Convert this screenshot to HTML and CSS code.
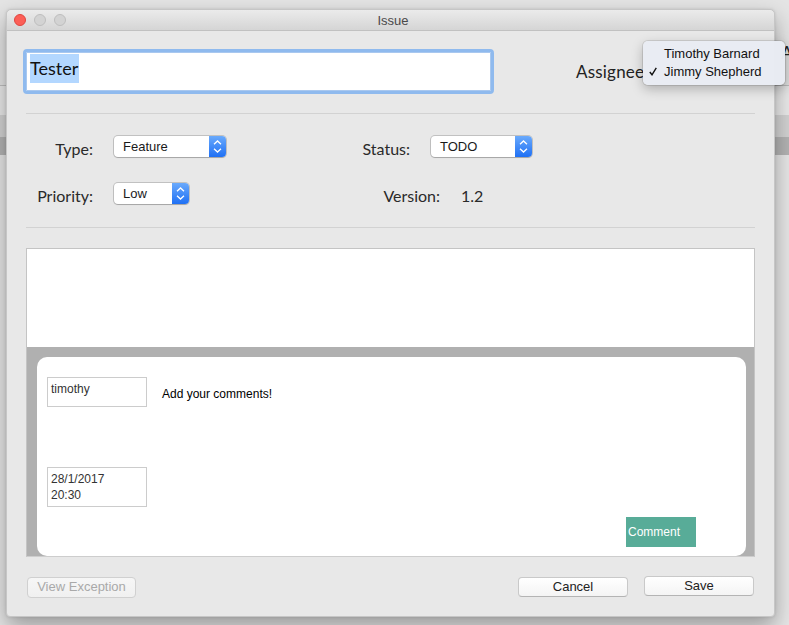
FILE: index.html
```html
<!DOCTYPE html>
<html>
<head>
<meta charset="utf-8">
<title>Issue</title>
<link rel="stylesheet" href="styles.css">
</head>
<body>
<div class="bg-letter">A</div>
<div class="window">
  <div class="titlebar">
    <div class="lights">
      <span class="light red"></span>
      <span class="light"></span>
      <span class="light"></span>
    </div>
    <div class="title">Issue</div>
    <div></div>
  </div>
  <div class="content">
    <div class="top-row">
      <div class="field"><span class="sel">Tester</span></div>
      <div class="assignee">Assignee</div>
    </div>
    <div class="sep sep-1"></div>
    <div class="form-row row-1">
      <span class="label lw-67">Type:</span>
      <div class="popup pw-112">
        <span class="popup-text">Feature</span>
        <span class="popup-arrows"><svg width="17" height="21" viewBox="0 0 17 21"><path d="M5 8.2 L8.5 5 L12 8.2" fill="none" stroke="#fff" stroke-width="1.3"/><path d="M5 12.8 L8.5 16 L12 12.8" fill="none" stroke="#fff" stroke-width="1.3"/></svg></span>
      </div>
      <span class="label lw-163">Status:</span>
      <div class="popup pw-101">
        <span class="popup-text">TODO</span>
        <span class="popup-arrows"><svg width="17" height="21" viewBox="0 0 17 21"><path d="M5 8.2 L8.5 5 L12 8.2" fill="none" stroke="#fff" stroke-width="1.3"/><path d="M5 12.8 L8.5 16 L12 12.8" fill="none" stroke="#fff" stroke-width="1.3"/></svg></span>
      </div>
    </div>
    <div class="form-row row-2">
      <span class="label lw-67">Priority:</span>
      <div class="popup pw-75">
        <span class="popup-text">Low</span>
        <span class="popup-arrows"><svg width="17" height="21" viewBox="0 0 17 21"><path d="M5 8.2 L8.5 5 L12 8.2" fill="none" stroke="#fff" stroke-width="1.3"/><path d="M5 12.8 L8.5 16 L12 12.8" fill="none" stroke="#fff" stroke-width="1.3"/></svg></span>
      </div>
      <span class="label lw-230">Version:</span>
      <span class="value">1.2</span>
    </div>
    <div class="sep sep-2"></div>
    <div class="panel">
      <div class="panel-top"></div>
      <div class="panel-bottom">
        <div class="card">
          <div class="card-row">
            <div class="mini-box user-box">timothy</div>
            <div class="comment-text">Add your comments!</div>
          </div>
          <div class="mini-box date-box">28/1/2017<br>20:30</div>
          <div class="card-actions">
            <div class="comment-btn">Comment</div>
          </div>
        </div>
      </div>
    </div>
    <div class="actions">
      <div class="btn btn-view">View Exception</div>
      <div class="btn btn-cancel">Cancel</div>
      <div class="btn btn-save">Save</div>
    </div>
  </div>
</div>
<div class="menu">
  <div class="menu-item"><span class="check"></span><span>Timothy Barnard</span></div>
  <div class="menu-item"><span class="check"><svg width="8" height="9" viewBox="0 0 8 9"><path d="M0.8 5 L3 7.8 L7.3 0.8" fill="none" stroke="#111" stroke-width="1.4"/></svg></span><span>Jimmy Shepherd</span></div>
</div>
</body>
</html>
```

FILE: styles.css
```css
* { box-sizing: border-box; }

body {
  margin: 0;
  width: 789px;
  height: 625px;
  overflow: hidden;
  position: relative;
  font-family: "Liberation Sans", Arial, sans-serif;
  background: linear-gradient(to bottom,
    #e4e4e4 0, #e4e4e4 85px,
    #bfbfbf 85px, #bfbfbf 86px,
    #e9e9e9 86px, #e9e9e9 115px,
    #d2d2d2 115px, #d2d2d2 137px,
    #b3b3b3 137px, #b3b3b3 155px,
    #e6e6e6 155px, #e6e6e6 100%);
}

.bg-letter {
  position: absolute;
  left: 781px;
  top: 42px;
  font: 17px Lato, sans-serif;
  color: #222;
}

.window {
  margin: 9px 0 0 6px;
  width: 769px;
  height: 608px;
  background: #e8e8e8;
  border: 1px solid #c6c6c6;
  border-radius: 5px 5px 4px 4px;
  box-shadow: 0 10px 22px rgba(0, 0, 0, 0.33), 0 0 3px rgba(0, 0, 0, 0.12);
  display: flex;
  flex-direction: column;
}

.titlebar {
  flex: none;
  height: 21px;
  display: grid;
  grid-template-columns: 1fr auto 1fr;
  align-items: center;
  padding-left: 7px;
  background: linear-gradient(#ebebeb, #d5d5d5);
  border-bottom: 1px solid #c1c1c1;
  border-radius: 5px 5px 0 0;
}

.lights {
  display: flex;
  gap: 8px;
}

.light {
  width: 12px;
  height: 12px;
  border-radius: 50%;
  background: #d3d3d3;
  border: 1px solid #bebebe;
}

.light.red {
  background: #fc5f57;
  border-color: #e0443e;
}

.title {
  font-size: 13px;
  color: #4a4a4a;
  padding-right: 2px;
}

.content {
  flex: 1;
  display: flex;
  flex-direction: column;
  padding: 18px 19px 0 19px;
}

.top-row {
  display: flex;
  align-items: center;
}

.field {
  margin-left: -3px;
  width: 471px;
  height: 45px;
  background: #fff;
  border: 3px solid #8fbaee;
  border-radius: 4px;
  box-shadow: inset 0 0 0 1px #a9c8ef;
  display: flex;
  align-items: flex-start;
  padding: 2px 0 0 4px;
}

.sel {
  background: #b3d7ff;
  height: 29px;
  line-height: 29px;
  font: 18px/29px Lato, sans-serif;
  color: #111;
  padding-right: 1px;
}

.assignee {
  margin-left: 82px;
  font: 17px Lato, sans-serif;
  color: #222;
  letter-spacing: 0.2px;
}

.sep {
  height: 1px;
  background: #d2d2d2;
  flex: none;
}

.sep-1 { margin-top: 19px; }
.sep-2 { margin-top: 23px; }

.form-row {
  display: flex;
  align-items: center;
  gap: 21px;
  height: 21px;
}

.row-1 { margin-top: 22px; }
.row-2 { margin-top: 26px; }

.label {
  flex: none;
  text-align: right;
  font: 16px Lato, sans-serif;
  color: #2a2a2a;
  padding-top: 3px;
}

.lw-67 { width: 67px; }
.lw-163 { width: 163px; }
.lw-230 { width: 230px; }

.value {
  font: 16px Lato, sans-serif;
  color: #2a2a2a;
  padding-top: 3px;
}

.popup {
  flex: none;
  height: 21px;
  display: flex;
  align-items: stretch;
  background: #fff;
  border-radius: 4px;
  overflow: hidden;
  box-shadow: 0 0 0 1px rgba(0, 0, 0, 0.17), 0 1px 1px rgba(0, 0, 0, 0.14);
}

.pw-112 { width: 112px; }
.pw-101 { width: 101px; }
.pw-75 { width: 75px; }

.popup-text {
  flex: 1;
  padding-left: 9px;
  font-size: 13px;
  line-height: 21px;
  color: #1a1a1a;
}

.popup-arrows {
  flex: none;
  width: 17px;
  display: flex;
  background: linear-gradient(#6aaafc, #1f70f4);
}

.panel {
  margin-top: 20px;
  height: 309px;
  border: 1px solid #c4c4c4;
  border-bottom-color: #cdcdcd;
  display: flex;
  flex-direction: column;
  flex: none;
}

.panel-top {
  height: 98px;
  background: #fff;
  flex: none;
}

.panel-bottom {
  flex: 1;
  background: #b0b0b0;
  padding: 10px 8px 0 10px;
  display: flex;
}

.card {
  flex: 1;
  background: #fff;
  border-radius: 10px;
  padding: 20px 0 0 10px;
  display: flex;
  flex-direction: column;
}

.card-row {
  display: flex;
  align-items: center;
}

.mini-box {
  width: 100px;
  border: 1px solid #cccccc;
  padding: 3px 3px;
  font-size: 12px;
  line-height: 16px;
  color: #333;
  flex: none;
}

.user-box { height: 30px; }

.date-box {
  height: 40px;
  margin-top: 60px;
}

.comment-text {
  margin-left: 15px;
  font-size: 12px;
  color: #000;
  padding-top: 3px;
}

.card-actions {
  margin-top: 10px;
  display: flex;
  justify-content: flex-end;
  padding-right: 50px;
}

.comment-btn {
  width: 70px;
  height: 30px;
  background: #58ac98;
  color: #fff;
  font-size: 12px;
  line-height: 30px;
  padding-left: 2px;
}

.actions {
  display: flex;
  align-items: flex-start;
  margin-top: 20px;
}

.btn {
  height: 20px;
  width: 110px;
  text-align: center;
  font-size: 13px;
  line-height: 18px;
  color: #222;
  background: linear-gradient(#ffffff, #f4f4f4);
  border: 1px solid #c9c9c9;
  border-bottom-color: #b4b4b4;
  border-radius: 4px;
}

.btn-view {
  width: 109px;
  height: 21px;
  margin-left: 1px;
  color: #a9a9a9;
  border-color: #d0d0d0;
  background: linear-gradient(#f6f6f6, #f0f0f0);
}

.btn-cancel { margin-left: auto; }

.btn-save {
  margin-left: 16px;
  margin-right: 1px;
  margin-top: -1px;
}

.menu {
  position: absolute;
  left: 643px;
  top: 41px;
  width: 142px;
  height: 44px;
  padding-top: 3px;
  border-radius: 5px;
  background: rgba(233, 236, 243, 0.98);
  box-shadow: 0 4px 12px rgba(0, 0, 0, 0.25), 0 0 0 1px rgba(0, 0, 0, 0.1);
}

.menu-item {
  height: 18px;
  display: flex;
  align-items: center;
  font-size: 13px;
  color: #111;
}

.check {
  width: 15px;
  margin-left: 6px;
  display: flex;
  align-items: center;
  flex: none;
}
```
